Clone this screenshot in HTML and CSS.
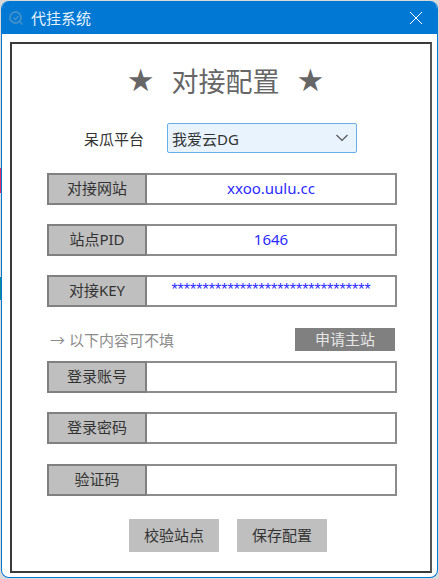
FILE: index.html
```html
<!DOCTYPE html>
<html lang="en">
  <head>
    <meta charset="UTF-8" />
    <meta name="viewport" content="width=device-width, initial-scale=1.0" />
    <title>代挂系统</title>
    <link rel="stylesheet" href="styles.css">
  </head>
  <body>
    <div class="window">
      <div class="titlebar">
        <svg class="app-icon" width="16" height="16" viewBox="0 0 16 16">
          <circle cx="7.5" cy="7.5" r="5.5" fill="none" stroke="#3f8fc9" stroke-width="2" />
          <path d="M5.5 7.5l1.8 2 3-3.5M11.5 11.5l3 3" fill="none" stroke="#3f8fc9" stroke-width="1.5" />
        </svg>
        <span class="window-title">代挂系统</span>
        <svg class="close" width="14" height="14" viewBox="0 0 14 14">
          <path d="M1 1l12 12M13 1L1 13" stroke="#fff" stroke-width="1" />
        </svg>
      </div>

      <div class="panel">
        <h1 class="heading">
          <span class="star">★</span>
          <span>对接配置</span>
          <span class="star">★</span>
        </h1>

        <div class="platform">
          <span class="platform-label">呆瓜平台</span>
          <div class="select">
            <span>我爱云DG</span>
            <svg width="14" height="8" viewBox="0 0 14 8">
              <path d="M1.5 1l5.5 5.5L12.5 1" fill="none" stroke="#555" stroke-width="1.2" />
            </svg>
          </div>
        </div>

        <div class="field first">
          <div class="field-label">对接网站</div>
          <div class="field-value">xxoo.uulu.cc</div>
        </div>
        <div class="field">
          <div class="field-label">站点PID</div>
          <div class="field-value">1646</div>
        </div>
        <div class="field">
          <div class="field-label">对接KEY</div>
          <div class="field-value secret">********************************</div>
        </div>

        <div class="hint-row">
          <span class="hint">→ 以下内容可不填</span>
          <div class="apply-btn">申请主站</div>
        </div>

        <div class="field login">
          <div class="field-label">登录账号</div>
          <div class="field-value"></div>
        </div>
        <div class="field">
          <div class="field-label">登录密码</div>
          <div class="field-value"></div>
        </div>
        <div class="field captcha">
          <div class="field-label">验证码</div>
          <div class="field-value"></div>
        </div>

        <div class="actions">
          <div class="btn">校验站点</div>
          <div class="btn">保存配置</div>
        </div>
      </div>
    </div>
  </body>
</html>
```

FILE: styles.css
```css
* {
  box-sizing: border-box;
}

html,
body {
  margin: 0;
  height: 100%;
}

/* 窗口后面露出的桌面 */
body {
  background-color: #d9d9d9;
  background-image: linear-gradient(
    #d9d9d9 168px,
    #e0306a 168px,
    #e0306a 193px,
    #d9d9d9 193px,
    #d9d9d9 277px,
    #0f8a94 277px,
    #0f8a94 300px,
    #d9d9d9 300px
  );
  background-size: 1px 100%;
  background-repeat: no-repeat;
  padding: 1px;
  font-family: "Noto Sans", "Noto Sans CJK SC", sans-serif;
  font-size: 15px;
  color: #333;
}

.window {
  width: 437px;
  height: 577px;
  background-color: #fff;
  border: 1px solid #0078d4;
  border-top: 0;
  border-radius: 8px;
  overflow: hidden;
}

.titlebar {
  display: flex;
  align-items: center;
  height: 33px;
  padding: 0 14px 0 6px;
  background-color: #0078d4;
  color: #fff;
}

.app-icon {
  flex: none;
}

.window-title {
  margin-left: 7px;
  font-size: 15px;
  color: #e8f2fb;
}

.close {
  margin-left: auto;
}

/* 主面板 */
.panel {
  width: 422px;
  height: 531px;
  margin: 8px 0 0 8px;
  padding: 0 35px;
  border: 2px solid #3a3a3a;
  border-right-color: #555;
}

.heading {
  display: flex;
  justify-content: center;
  align-items: center;
  gap: 17px;
  height: 30px;
  margin: 21px 0 0;
  padding-left: 9px;
  font-family: "Liberation Serif", "Noto Sans CJK SC", serif;
  font-size: 27px;
  font-weight: 400;
  color: #666;
}

.star {
  font-family: "DejaVu Sans", sans-serif;
  font-size: 31px;
  color: #666;
}

.platform {
  display: flex;
  align-items: center;
  height: 30px;
  margin-top: 28px;
  padding-left: 37px;
}

.platform-label {
  width: 83px;
}

.select {
  display: flex;
  align-items: center;
  justify-content: space-between;
  width: 190px;
  height: 30px;
  padding: 0 7px 0 4px;
  background-color: #e8f3fe;
  border: 1px solid #6aaee6;
  border-radius: 2px;
}

/* 表单行 */
.field {
  display: flex;
  width: 350px;
  height: 32px;
  margin-top: 19px;
}

.field.first {
  margin-top: 20px;
}

.field.login {
  margin-top: 10px;
}

.field.captcha {
  margin-top: 20px;
}

.field-label {
  flex: none;
  width: 100px;
  line-height: 27px;
  text-align: center;
  background-color: #bfbfbf;
  border: 2px solid #808080;
}

.field-value {
  flex: 1;
  line-height: 27px;
  text-align: center;
  color: #2b2bff;
  border: 2px solid #8c8c8c;
  border-left: 0;
}

.secret {
  font-family: "Liberation Sans", sans-serif;
  font-size: 16px;
  line-height: 25px;
}

.hint-row {
  display: flex;
  align-items: center;
  justify-content: space-between;
  height: 24px;
  margin-top: 20px;
  padding: 0 0 0 3px;
}

.hint {
  color: #8c8c8c;
}

.apply-btn {
  width: 100px;
  height: 23px;
  line-height: 22px;
  text-align: center;
  color: #e6e6e6;
  background-color: #808080;
}

.actions {
  display: flex;
  gap: 18px;
  margin-top: 23px;
  padding-left: 82px;
}

.btn {
  width: 90px;
  height: 33px;
  line-height: 32px;
  text-align: center;
  background-color: #bfbfbf;
}
```
